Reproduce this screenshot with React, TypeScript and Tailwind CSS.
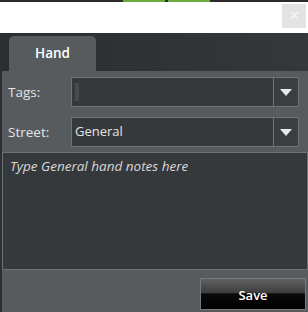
import React from 'react';

const font = { fontFamily: '"Open Sans", "Noto Sans", sans-serif' };

function Caret() {
  return (
    <svg width="12" height="7" viewBox="0 0 12 7">
      <path d="M0 0 H12 L6 7 Z" fill="#e8e8e8" />
    </svg>
  );
}

function SelectBox({ value, cursor }: { value?: string; cursor?: boolean }) {
  return (
    <div className="flex h-[30px] w-[228px] border border-[#717477] bg-[#36393c]">
      <div className="flex flex-1 items-center pl-[3px] text-[13px] text-[#e4e4e4]">
        {cursor && <div className="h-[18px] w-[4px] bg-[#474b4e]" />}
        {value}
      </div>
      <div className="flex w-[25px] items-center justify-center border-l border-[#717477] bg-[#3b3e41]">
        <Caret />
      </div>
    </div>
  );
}

export default function App() {
  return (
    <div className="flex h-[312px] w-[308px] flex-col bg-[#2c3033]" style={font}>
      <div className="flex h-[2px] bg-[#2b2b2b]">
        <div className="ml-[123px] h-[2px] w-[42px] bg-[#6aab3b]" />
        <div className="ml-[3px] h-[2px] w-[42px] bg-[#6aab3b]" />
      </div>
      <div className="flex h-[31px] justify-end bg-white">
        <div className="mr-[2px] mt-[2px] flex h-[24px] w-[24px] items-center justify-center bg-[#e3e3e3] text-[13px] text-[#f7f7f7]">
          ✕
        </div>
      </div>
      <div className="flex h-[38px] items-end bg-gradient-to-r from-[#2a2e31] to-[#35383b]">
        <div className="ml-[9px] flex h-[35px] w-[87px] items-center justify-center rounded-t-[5px] bg-[#575b5e] text-[13.5px] font-semibold text-white">
          Hand
        </div>
      </div>
      <div className="ml-[2px] flex flex-1 flex-col bg-[#575b5e]">
        <div className="mt-[6px] flex items-center">
          <span className="w-[69px] pl-[6px] text-[13.5px] text-[#e4e4e4]">Tags:</span>
          <SelectBox cursor />
        </div>
        <div className="mt-[10px] flex items-center">
          <span className="w-[69px] pl-[6px] text-[13.5px] text-[#e4e4e4]">Street:</span>
          <SelectBox value="General" />
        </div>
        <div className="mt-[5px] h-[118px] border border-[#6e7174] bg-[#36393c] px-[7px] pt-[3px] text-[13.5px] italic text-[#d8d8d8]">
          Type General hand notes here
        </div>
        <div className="mt-[8px] flex justify-end pr-[2px]">
          <button className="h-[32px] w-[106px] border border-[#7a7a7a] bg-[linear-gradient(to_bottom,#606060_0%,#3e3e3e_45%,#0a0a0a_50%,#000000_100%)] pt-[4px] text-[13px] font-semibold text-white">
            Save
          </button>
        </div>
      </div>
    </div>
  );
}
